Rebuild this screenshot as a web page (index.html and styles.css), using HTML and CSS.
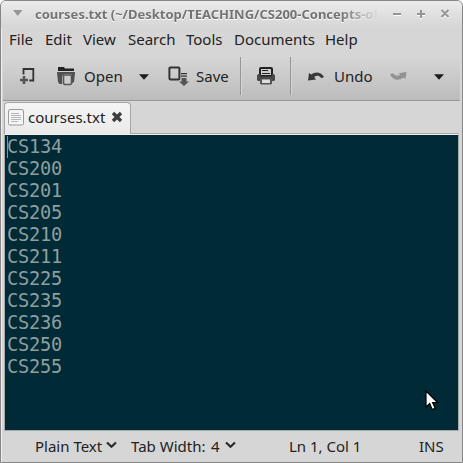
FILE: index.html
```
<!DOCTYPE html>
<html lang="en">
<head>
<meta charset="utf-8">
<title>courses.txt</title>
<link rel="stylesheet" href="styles.css">
</head>
<body>
<div class="window">
  <header class="titlebar">
    <svg class="win-menu" width="10" height="6" viewBox="0 0 10 6"><path d="M0 0h9.500L4.750 6z" fill="#969696"/></svg>
    <div class="title">courses.txt (~/Desktop/TEACHING/CS200-Concepts-of</div>
    <svg class="win-buttons" width="60" height="12" viewBox="0 0 60 12">
      <g fill="none" stroke="#fff" stroke-width="2" transform="translate(0 1)"><path d="M2 6h8M26 6h8M30 2v8M50.500 2l7 7M57.500 2l-7 7"/></g>
      <g fill="none" stroke="#949494" stroke-width="2"><path d="M2 6h8M26 6h8M30 2v8M50.500 2l7 7M57.500 2l-7 7"/></g>
    </svg>
  </header>
  <nav class="menubar">
    <span class="m-file">File</span><span class="m-edit">Edit</span><span class="m-view">View</span><span class="m-search">Search</span><span class="m-tools">Tools</span><span class="m-docs">Documents</span><span class="m-help">Help</span>
  </nav>
  <div class="toolbar">
    <svg class="i-new" width="18" height="18" viewBox="0 0 18 18"><path d="M4.500 7.500V2h9.800v11.500h-4" fill="none" stroke="#333" stroke-width="1.800"/><path d="M5 9v8M1 13h8" stroke="#555" stroke-width="2.600"/></svg>
    <svg class="i-open" width="19" height="19" viewBox="0 0 19 19"><path d="M1 0h6l1 1.500h9V4H1z" fill="#222"/><path d="M0 5h18v2h-3V7H7l-2 2v8H2.500L1 15z" fill="#505050"/><path d="M6.500 8h8v8.500l-1 1h-6l-1-1z" fill="#ccc" stroke="#555" stroke-width="1.600"/><path d="M15 6h3l-1 9-2 1z" fill="#505050"/></svg>
    <span class="t-open">Open</span>
    <svg class="i-arrow1" width="10" height="6" viewBox="0 0 10 6"><path d="M0 .3h10L5 5.700z" fill="#1c1c1c"/></svg>
    <svg class="i-save" width="21" height="21" viewBox="0 0 21 21"><rect x="1.400" y="1.400" width="10" height="12" rx=".8" fill="none" stroke="#333" stroke-width="2"/><path d="M13 7h6v1.200h-6zM13 9.500h6v1.200h-6z" fill="#333"/><path d="M13.500 12h5v3.500H21L16 20l-5-4.500h2.500z" fill="#555"/></svg>
    <span class="t-save">Save</span>
    <i class="sep sep1"></i>
    <svg class="i-print" width="18" height="18" viewBox="0 0 18 18"><rect x="3" y="1" width="12" height="8" rx="1" fill="#ccc" stroke="#222" stroke-width="2"/><path d="M5 3.500h6M5 6.500h8" stroke="#222"/><path d="M1.300 7H3v2.500h12V7h1.700L18 8.300V13l-1 1H1l-1-1V8.300z" fill="#484848"/><path d="M3 12h12v4.500l-1 1H4l-1-1z" fill="#555"/><path d="M5 12.500h8V16H5z" fill="#ddd"/></svg>
    <i class="sep sep2"></i>
    <svg class="i-undo" width="17" height="10" viewBox="0 0 17 10"><path d="M1 1l2.300 1.500C7-.8 13-.3 16 5l-2.500 1.300C11.700 3.500 9 3 6.200 5L8 7.500 0 8.600z" fill="#383838"/></svg>
    <span class="t-undo">Undo</span>
    <svg class="i-redo" width="17" height="9" viewBox="0 0 17 9"><path d="M0 2.200l3-.9c1.500 2.500 4.500 3 7.300 1.400L8.500 1.200 16.500 0l-1.200 7-2-1.500C8.500 9.500 2.500 8 0 2.200z" fill="#929292"/></svg>
    <svg class="i-arrow2" width="10" height="6" viewBox="0 0 10 6"><path d="M0 .3h10L5 5.700z" fill="#1c1c1c"/></svg>
  </div>
  <div class="tabs">
    <div class="tab">
      <svg class="doc" width="17" height="17" viewBox="0 0 17 17"><rect x=".5" y=".5" width="15" height="15.500" rx="1.500" fill="#f5f5f5" stroke="#999"/><path d="M3 4.500h8M3 6.500h10M3 8.500h10M3 10.500h10M3 12.500h7" stroke="#b5b5b5"/></svg>
      <span class="tab-name">courses.txt</span>
      <svg class="close" width="12" height="12" viewBox="0 0 12 12"><path d="M2 2l8 8M10 2l-8 8" stroke="#3c3c3c" stroke-width="3.300"/></svg>
    </div>
  </div>
  <main class="editor"><pre class="code">CS134
CS200
CS201
CS205
CS210
CS211
CS225
CS235
CS236
CS250
CS255</pre><i class="caret"></i>
    <svg class="pointer" width="16" height="22" viewBox="0 0 16 22"><path d="M2 1v16l3.700-3.500 2.500 6 3-1.300-2.600-5.700h5z" fill="#fff" stroke="#000" stroke-width="1.200"/></svg>
  </main>
  <footer class="status">
    <span class="s-lang">Plain Text</span>
    <svg class="chev c1" width="11" height="8" viewBox="0 0 11 8"><path d="M1 1.500l4.500 4.300L10 1.500" fill="none" stroke="#2b2b2b" stroke-width="2.200"/></svg>
    <span class="s-tab">Tab Width:</span><span class="s-num">4</span>
    <svg class="chev c2" width="11" height="8" viewBox="0 0 11 8"><path d="M1 1.500l4.500 4.300L10 1.500" fill="none" stroke="#2b2b2b" stroke-width="2.200"/></svg>
    <span class="s-pos">Ln 1, Col 1</span>
    <span class="s-ins">INS</span>
  </footer>
</div>
</body>
</html>
```
FILE: styles.css
```
* { box-sizing: border-box; }
body { margin: 0; background: #fff; font: 15px/20px "Noto Sans", sans-serif; color: #222; overflow: hidden; }
.window { width: 463px; height: 463px; border: 1px solid #878587; border-radius: 6px 6px 0 0; background: #d6d6d6; overflow: hidden; display: flex; flex-direction: column; box-shadow: inset 1px 1px #eee; }
svg { flex: none; display: block; }
span { flex: none; white-space: pre; }
.titlebar { height: 27px; display: flex; background: linear-gradient(#ebebeb, #d6d6d6 26px); }
.win-menu { margin: 9px 0 0 12px; }
.title { width: 343px; margin: 3px 0 0 12px; font-size: 13px; font-weight: 700; color: #737373; white-space: nowrap; text-shadow: 0 1px #fff; -webkit-mask-image: linear-gradient(90deg, #000 305px, transparent 343px); }
.win-buttons { margin: 7px 0 0 13px; }
.menubar { height: 29px; display: grid; grid-template-columns: 36px 38px 45px 58px 48px 91px 60px; padding: 1px 0 0 8px; }
.toolbar { height: 44px; margin: 0 2px; border-bottom: 1px solid #969696; background: linear-gradient(#d6d6d6, #bcbcbc); display: flex; align-items: flex-start; }
.i-new { margin: 10px 0 0 16px; }
.i-open { margin: 10px 0 0 20px; }
.t-open { margin: 9px 0 0 8px; width: 55px; }
.i-arrow1 { margin: 17px 0 0 0; }
.i-save { margin: 9px 0 0 19px; }
.t-save { margin: 9px 0 0 7px; width: 44px; }
.sep { width: 2px; height: 38px; flex: none; border-left: 1px solid #969696; border-right: 1px solid #d5d5d5; }
.i-print { margin: 10px 0 0 15px; }
.sep2 { margin-left: 15px; }
.i-undo { margin: 15px 0 0 16px; }
.t-undo { margin: 9px 0 0 9px; width: 56px; }
.i-redo { margin: 15px 0 0 0; }
.i-arrow2 { margin: 17px 0 0 27px; }
.tabs { height: 33px; margin: 0 3px; border-bottom: 1px solid #aaa; padding-top: 1px; }
.tab { width: 127px; height: 32px; border: 1px solid #a5a5a5; border-bottom: 0; border-radius: 4px 4px 0 0; background: linear-gradient(#f5f5f5, #eaeaea); display: flex; }
.doc { margin: 6px 0 0 3px; }
.tab-name { margin: 4px 0 0 3px; width: 83px; }
.close { margin: 8px 0 0 0; }
.editor { height: 297px; margin: 0 3px 0 3px; border: 1px solid #a8a8a8; border-top-color: #f1f1f1; background: #002b36; position: relative; padding: 1px 0 0 2px; }
.code { margin: 0; font: 18.667px/22px "DejaVu Sans Mono", monospace; letter-spacing: -0.238px; color: #8f9e9f; }
.caret { position: absolute; left: 2px; top: 1px; width: 1px; height: 22px; background: #839496; }
.pointer { position: absolute; left: 419px; top: 255px; }
.status { flex: 1; display: flex; padding: 5px 0 0 34px; }
.s-lang { width: 71px; }
.chev { margin-top: 5px; }
.s-tab { margin-left: 14px; width: 80px; }
.s-num { width: 14px; }
.s-pos { margin-left: 53px; width: 130px; }
```
